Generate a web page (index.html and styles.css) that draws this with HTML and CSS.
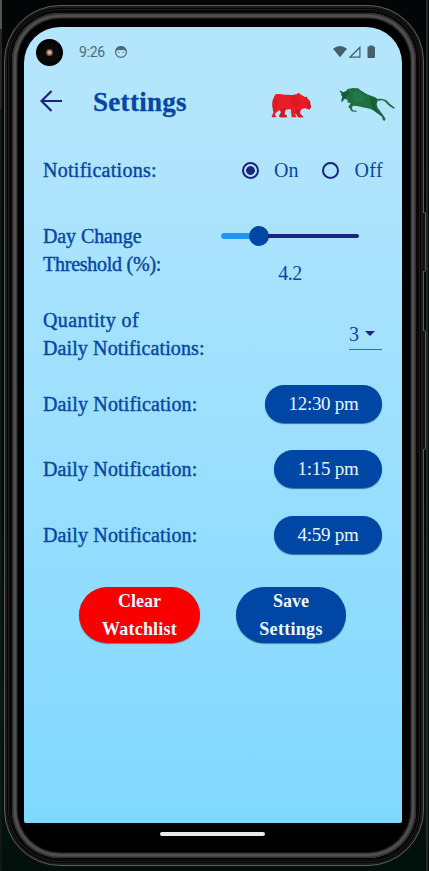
FILE: index.html
```
<!DOCTYPE html>
<html lang="en">
<head>
<meta charset="utf-8">
<title>Settings</title>
<link rel="stylesheet" href="styles.css">
</head>
<body>
<div class="phone">
  <i class="side-key power"></i><i class="side-key volume"></i>
  <div class="rim"><div class="bezel"><div class="display">
    <main class="screen">
      <div class="status">
        <span class="camera"><i></i></span>
        <span class="clock">9:26</span>
        <svg class="face" viewBox="0 0 14 14"><circle cx="7" cy="7" r="5.400" fill="none" stroke="#4f6b77" stroke-width="1.200"/><path d="M1.500 6Q2 1.200 7 1.200T12.500 6L10.500 5.500 9.500 4.700 7 5.300 4.300 4.700 3.300 5.700Z" fill="#4f6b77"/><circle cx="4.900" cy="7.400" r=".65" fill="#4f6b77"/><circle cx="9.100" cy="7.400" r=".65" fill="#4f6b77"/></svg>
        <svg class="signals" viewBox="0 0 44 14"><g fill="#455f6b"><path d="M0 3.800Q7 -1.800 14 3.800L7 12.200Z"/><path d="M27.500.8V12.800H15.500ZM26.300 3.900 18.600 11.600H26.300Z" fill-rule="evenodd"/><path d="M36.500 1.500V.5H40V1.500H41Q42 1.500 42 2.500V12Q42 13 41 13H35.500Q34.500 13 34.500 12V2.500Q34.500 1.500 35.500 1.500Z"/></g></svg>
      </div>
      <header class="appbar">
        <svg class="back" viewBox="0 0 22 22"><path d="M22 11H2M11.500 1 1.500 11 11.500 21" fill="none" stroke="#1a237e" stroke-width="2.200"/></svg>
        <h1>Settings</h1>
        <svg class="bear" viewBox="34 34 122 78"><path fill="#e81c24" d="M39 59Q42 45 49 40Q63 39 76 42L99 43L110 41 117 36 122 41 136 49 142 48 143 53 151 61 154 79 149 87 137 83 128 84 122 90 121 99 131 108 131 110H116L108 97 107 103 111 107 108 110H96L93 85 78 87 74 100 82 106 81 110H63L58 107 64 95 59 88 47 98 46 104 50 107 48 110H37L36 106 41 97 38 77Z"/><path fill="#c81b25" d="M64 84 78 81 74 100 82 106 81 110H63L58 107 64 95ZM110 84 122 90 121 99 131 110H116L108 97ZM139 66 147 63 154 79 149 87Z"/><path fill="#db1b24" d="M39 62 51 50 58 64 47 91 38 77ZM92 50 108 48 122 63 111 80 95 75Z"/></svg>
        <svg class="bull" viewBox="238 20 170 106"><path fill="#1f6f40" d="M241 30 248 36 258 33 264 26 279 23 295 24 306 32 322 42 345 50 354 56Q377 53 388 68Q395 75 406 82L402 85Q387 77 380 68Q373 59 366 60L354 61 351 71 354 82 372 106 378 116 374 122 369 118 367 109 343 91 331 85 309 81 292 77 280 76 276 83 280 90 291 91 290 95 275 93 271 85 266 79 273 69 263 66 264 58 253 56 249 65 244 62 248 50 243 42 247 39 240 35Z"/><path fill="#1b5c38" d="M243 31 252 38 263 31 268 38 260 52 246 60 249 49ZM328 48 350 55 347 82 369 109 342 90 334 72Z"/><path fill="#217a46" d="M278 34 297 32 317 52 304 69 282 61Z"/></svg>
      </header>
      <section class="rows">
        <div class="row notifications">
          <span class="label l-not">Notifications:</span>
          <div class="radios"><i class="radio on"></i><span>On</span><i class="radio"></i><span class="off">Off</span></div>
        </div>
        <div class="row threshold">
          <div class="label"><div class="l-day">Day Change</div><div class="l-thr">Threshold (%):</div></div>
          <div class="slider"><div class="track"><i class="filled"></i><i class="thumb"></i><i class="rest"></i></div><span>4.2</span></div>
        </div>
        <div class="row quantity">
          <div class="label"><div class="l-qty">Quantity of</div><div class="l-dns">Daily Notifications:</div></div>
          <div class="select"><span>3</span><i></i></div>
        </div>
        <div class="row daily"><span class="label l-dn">Daily Notification:</span><button class="pill wide">12:30 pm</button></div>
        <div class="row daily"><span class="label l-dn">Daily Notification:</span><button class="pill">1:15 pm</button></div>
        <div class="row daily"><span class="label l-dn">Daily Notification:</span><button class="pill">4:59 pm</button></div>
      </section>
      <div class="actions">
        <button class="clear">Clear<br><span>Watchlist</span></button>
        <button class="save">Save<br><span>Settings</span></button>
      </div>
    </main>
    <div class="home"><i></i></div>
  </div></div></div>
</div>
</body>
</html>
```
FILE: styles.css
```
* { box-sizing: border-box; }
body {
  margin: 0;
  height: 871px;
  overflow: hidden;
  padding: 5px 5px 5px 4px;
  background: linear-gradient(90deg, transparent 426px, #25272a 426px, #25272a 428px, #050a0a 428px),
    linear-gradient(#55534f 0 29px, #272328 29px 109px, #101719 109px) 0 0 / 2px 871px no-repeat,
    linear-gradient(#020606 0, #020808 500px, #03170f 700px, #02100b 871px);
  font-family: "Liberation Serif", serif;
  font-size: 20px;
  color: #0647a3;
}
i { display: block; }
button { border: 0; margin: 0; padding: 0; font: inherit; }
svg { display: block; flex: none; }
.phone {
  position: relative;
  width: 420px;
  height: 861px;
  padding: 2px;
  border-radius: 56px;
  border: 1px solid #5c5b59;
  background: #1b1b1b;
}
.side-key { position: absolute; right: -3px; width: 3px; border: 1px solid #5a5a5a; border-left: 0; background: #111; border-radius: 0 2px 2px 0; }
.power { top: 206px; height: 60px; }
.volume { top: 324px; height: 120px; }
.rim { height: 100%; padding: 5px; border-radius: 53px; background: #080808; box-shadow: inset 0 0 0 1px #040404, inset 0 0 0 2px #1d1d1d; }
.bezel { height: 100%; padding: 6px; border-radius: 48px; background: #000; box-shadow: inset 0 0 0 1px #2b2b2b, inset 0 0 0 2px #424242, inset 0 0 0 4px #505050, inset 0 0 0 5px #383838, inset 0 0 0 6px #171717; }
.display { height: 100%; width: 390px; padding: 8px 6px 0; border-radius: 42px; background: #000; }
.screen {
  height: 796px;
  width: 378px;
  border-radius: 36px 36px 2px 2px;
  background: linear-gradient(#b3e5fc 0, #b3e5fc 90px, #80d8ff 100%);
  overflow: hidden;
}
.status { display: flex; align-items: center; height: 50px; padding-left: 12px; }
.camera { width: 27px; height: 27px; border-radius: 50%; background: #090909; border: 3px solid #000; display: grid; place-items: center; }
.camera i { width: 7px; height: 7px; border-radius: 50%; background: radial-gradient(#e0b69b 0 20%, #75543f 60%, #333); }
.clock { width: 28px; margin-left: 16px; font: 14px Roboto, sans-serif; letter-spacing: -.3px; color: #4f6b77; }
.face { width: 14px; height: 14px; margin-left: 7px; }
.signals { width: 44px; height: 14px; margin-left: 205px; }
.appbar { display: flex; align-items: center; height: 50px; padding-left: 16px; }
.back { width: 22px; height: 22px; margin-top: -2px; }
h1 { width: 96px; margin: 0 0 0 31px; font-size: 27px; line-height: 34px; letter-spacing: .3px; -webkit-text-stroke: .3px #0647a3; }
.bear { width: 40.700px; height: 26px; margin: 5px 0 0 82.300px; }
.bull { width: 56.700px; height: 35.300px; margin: 5px 0 0 27.300px; }
.rows { margin: 10px 20px 0 19px; }
.row { display: flex; align-items: center; justify-content: space-between; }
.label { line-height: 28px; white-space: nowrap; -webkit-text-stroke: .4px #0647a3; }
.l-not { letter-spacing: .28px; margin-top: -1px; }
.l-day { letter-spacing: -.1px; }
.l-thr { letter-spacing: -.25px; }
.l-qty { letter-spacing: .4px; }
.l-dns { letter-spacing: .11px; }
.l-dn { letter-spacing: .15px; }
.notifications { height: 67px; }
.radios { display: flex; align-items: center; margin-right: -1px; }
.radio { width: 17px; height: 17px; border: 2px solid #1a237e; border-radius: 50%; margin-right: 15px; }
.radio.on { background: radial-gradient(circle, #1a237e 4px, transparent 4.700px); }
.radios span + .radio { margin-left: 24px; }
.off { letter-spacing: .4px; }
.threshold { height: 92px; }
.slider { width: 138px; height: 64px; margin: 0 23px 0 0; text-align: center; }
.track { display: flex; align-items: center; height: 20px; margin-top: 8px; }
.filled { width: 29px; height: 6px; border-radius: 3px 0 0 3px; background: #2196f3; }
.thumb { width: 20px; height: 20px; border-radius: 50%; background: #0047a5; margin-left: -1px; }
.rest { flex: 1; height: 4px; border-radius: 0 2px 2px 0; background: #1a237e; margin-left: -1px; }
.slider span { display: block; margin-top: 15px; line-height: 24px; letter-spacing: -.5px; }
.quantity { height: 75px; }
.select { width: 33px; height: 30px; display: flex; align-items: center; border-bottom: 1px solid #4762a5; margin-top: 2px; }
.select span { width: 9px; }
.select i { margin-left: 7px; margin-top: -1px; border: 5px solid transparent; border-top-color: #1a237e; border-bottom: 0; }
.daily { height: 65.500px; }
.pill { width: 108px; height: 38px; border-radius: 19px; background: #0047a5; color: #e8f5ff; font-size: 19px; letter-spacing: -.28px; box-shadow: 0 1px 1px #356c9c; }
.pill.wide { width: 117px; }
.actions { display: flex; gap: 36px; margin: 19px 0 0 55px; }
.actions button { height: 56px; border-radius: 28px; color: #f0f8ff; font-size: 18px; font-weight: bold; line-height: 28px; box-shadow: 0 1px 1px #58819c; }
.actions .clear { width: 121px; background: #f80000; }
.actions .save { width: 110px; background: #0047a5; }
.clear span { letter-spacing: .2px; }
.save span { letter-spacing: .3px; }
.home { display: flex; justify-content: center; padding: 9px 1px 0 0; }
.home i { width: 105px; height: 4px; border-radius: 2px; background: #eee9e9; }
```
